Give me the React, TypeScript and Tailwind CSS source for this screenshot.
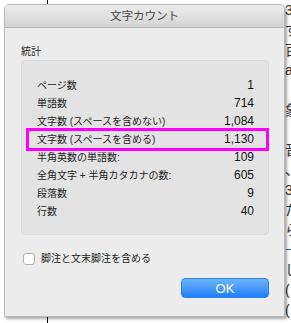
import React from 'react';

const rows = [
  { label: 'ページ数', value: '1' },
  { label: '単語数', value: '714' },
  { label: '文字数 (スペースを含めない)', value: '1,084' },
  { label: '文字数 (スペースを含める)', value: '1,130', highlight: true },
  { label: '半角英数の単語数:', value: '109' },
  { label: '全角文字 + 半角カタカナの数:', value: '605' },
  { label: '段落数', value: '9' },
  { label: '行数', value: '40' },
];

const bgChars = ['3', 'ず', '百', 'a', '', '象', '', '音', '、', '3', 'た', 'ら', '十', 'し', '(', '('];

export default function App() {
  return (
    <div
      className="relative w-[291px] h-[323px] bg-white overflow-hidden pl-[4px] pt-[4px]"
      style={{ fontFamily: '"Liberation Sans", "Noto Sans CJK JP", sans-serif' }}
    >
      {/* page behind the dialog */}
      <div className="absolute left-[47px] top-0 w-px h-full bg-black" />
      <div className="absolute left-[285px] top-0 flex flex-col text-[14px] leading-[20px] text-[#333]">
        {bgChars.map((c, i) => (
          <span key={i} className={i === 12 ? 'text-[#2a6fd6] h-[20px]' : 'h-[20px]'}>
            {c}
          </span>
        ))}
      </div>

      {/* dialog */}
      <div className="relative w-[281px] h-[313px] bg-[#ececec] border border-[#b8b8b8] rounded-t-[5px] shadow-[2px_2px_3px_rgba(0,0,0,0.35)] flex flex-col">
        <div className="h-[23px] rounded-t-[4px] bg-gradient-to-b from-[#ececec] to-[#d4d4d4] border-b border-[#b5b5b5] flex items-center justify-center">
          <span className="text-[11.7px] text-[#4a4a4a] tracking-[-0.2px]">文字カウント</span>
        </div>

        <div className="flex flex-col pl-[16px] pr-[15px]">
          <div className="mt-[17px] h-[13px] leading-[13px] text-[10px] text-[#222]">統計</div>
          <div className="mt-[2px] h-[175px] bg-[#e3e3e3] border border-[#dadada] rounded-[4px] pt-[15px] flex flex-col">
            {rows.map((r) => (
              <div key={r.label} className="relative h-[18px] flex items-center justify-between pl-[15px] pr-[14px]">
                <span className="text-[10px] text-[#222] whitespace-nowrap">{r.label}</span>
                <span className="text-[12px] text-[#111]">{r.value}</span>
                {r.highlight && (
                  <div className="absolute left-[4px] right-[-1px] top-[-2px] bottom-[-3px] border-[3px] border-[#fc00fc]" />
                )}
              </div>
            ))}
          </div>

          <div className="mt-[16px] flex items-center">
            <div className="ml-[2px] w-[12px] h-[12px] bg-white border border-[#b3b3b3] rounded-[3px]" />
            <span className="ml-[6px] text-[10px] text-[#222]">脚注と文末脚注を含める</span>
          </div>

          <div className="mt-[12px] flex justify-end">
            <button className="w-[88px] h-[20px] rounded-[4px] bg-gradient-to-b from-[#6cb4fb] to-[#1b7ff9] border border-[#2a82f0] text-white text-[13px] leading-none flex items-center justify-center">
              OK
            </button>
          </div>
        </div>
      </div>
    </div>
  );
}
